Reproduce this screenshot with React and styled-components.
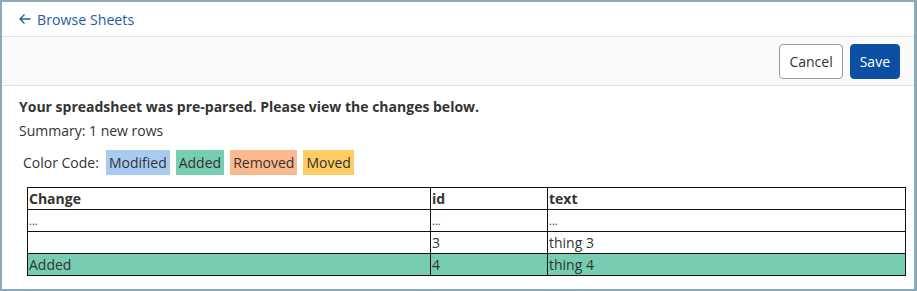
import styled, { createGlobalStyle } from "styled-components";

const GlobalStyle = createGlobalStyle`
  html, body {
    margin: 0;
    padding: 0;
    background: #fff;
  }
  * {
    box-sizing: border-box;
  }
`;

const legend = [
  { label: "Modified", color: "#a9cbf1" },
  { label: "Added", color: "#76cdb2" },
  { label: "Removed", color: "#fcb98e" },
  { label: "Moved", color: "#fdcc62" },
];

const rows = [
  { change: "...", id: "...", text: "...", small: true },
  { change: "", id: "3", text: "thing 3" },
  { change: "Added", id: "4", text: "thing 4", color: "#76cdb2" },
];

const App = () => {
  return (
    <S.Frame>
      <GlobalStyle />
      <S.TopBar>
        <S.BackLink href="#">
          <S.Arrow viewBox="0 0 12 12">
            <path d="M11.5 6H1M5.5 1.5L1 6l4.5 4.5" fill="none" stroke="currentColor" strokeWidth="1.3" />
          </S.Arrow>
          Browse Sheets
        </S.BackLink>
      </S.TopBar>
      <S.Toolbar>
        <S.Button>Cancel</S.Button>
        <S.Button $primary>Save</S.Button>
      </S.Toolbar>
      <S.Content>
        <S.Heading>Your spreadsheet was pre-parsed. Please view the changes below.</S.Heading>
        <S.Summary>Summary: 1 new rows</S.Summary>
        <S.Legend>
          <S.LegendLabel>Color Code:</S.LegendLabel>
          {legend.map((item) => (
            <S.Chip key={item.label} $color={item.color}>
              {item.label}
            </S.Chip>
          ))}
        </S.Legend>
        <S.Table>
          <colgroup>
            <S.Col $width="403px" />
            <S.Col $width="117px" />
            <S.Col />
          </colgroup>
          <thead>
            <tr>
              <S.Th>Change</S.Th>
              <S.Th>id</S.Th>
              <S.Th>text</S.Th>
            </tr>
          </thead>
          <tbody>
            {rows.map((row, i) => (
              <S.Tr key={i} $color={row.color}>
                <S.Td $small={row.small}>{row.change}</S.Td>
                <S.Td $small={row.small}>{row.id}</S.Td>
                <S.Td $small={row.small}>{row.text}</S.Td>
              </S.Tr>
            ))}
          </tbody>
        </S.Table>
      </S.Content>
    </S.Frame>
  );
};

export default App;

const Frame = styled.div`
  width: 917px;
  height: 291px;
  border: 2px solid #8ba9b9;
  border-right-width: 3px;
  font-family: "Open Sans", "Liberation Sans", sans-serif;
  font-size: 14px;
  color: #333;
  overflow: hidden;
`;

const TopBar = styled.div`
  height: 35px;
  display: flex;
  align-items: center;
  padding-left: 17px;
  border-bottom: 1px solid #e1e1e1;
`;

const BackLink = styled.a`
  display: flex;
  align-items: center;
  gap: 6px;
  color: #1f5ca6;
  text-decoration: none;
  font-size: 14.2px;
`;

const Arrow = styled.svg`
  width: 12px;
  height: 12px;
`;

const Toolbar = styled.div`
  height: 49px;
  display: flex;
  justify-content: flex-end;
  align-items: center;
  gap: 7px;
  padding-right: 14px;
  background: #fafafb;
  border-bottom: 1px solid #e1e1e1;
`;

const Button = styled.button`
  height: 35px;
  padding: 0 9px;
  border-radius: 4px;
  font-family: inherit;
  font-size: 14px;
  font-weight: 500;
  border: 1px solid ${({ $primary }) => ($primary ? "#0c4ea3" : "#9a9a9a")};
  background: ${({ $primary }) => ($primary ? "#0c4ea3" : "#fff")};
  color: ${({ $primary }) => ($primary ? "#fff" : "#333")};
  cursor: pointer;
`;

const Content = styled.div`
  padding: 11px 17px 0;
`;

const Heading = styled.div`
  font-weight: 700;
  line-height: 20px;
`;

const Summary = styled.div`
  margin-top: 4px;
  line-height: 20px;
`;

const Legend = styled.div`
  display: flex;
  align-items: center;
  gap: 6px;
  margin-top: 9px;
  padding-left: 4px;
`;

const LegendLabel = styled.span`
  margin-right: 1px;
`;

const Chip = styled.span`
  background: ${({ $color }) => $color};
  padding: 0 3px;
  line-height: 25px;
`;

const Table = styled.table`
  width: 879px;
  margin: 12px 0 0 8px;
  border-collapse: collapse;
  table-layout: fixed;
`;

const Col = styled.col`
  width: ${({ $width }) => $width || "auto"};
`;

const Th = styled.th`
  border: 1px solid #111;
  text-align: left;
  font-weight: 700;
  padding: 0 1px;
  height: 22px;
  line-height: 20px;
`;

const Tr = styled.tr`
  background: ${({ $color }) => $color || "transparent"};
`;

const Td = styled.td`
  border: 1px solid #111;
  padding: 0 1px;
  height: 22px;
  line-height: 20px;
  font-size: ${({ $small }) => ($small ? "11px" : "14px")};
  vertical-align: middle;
`;

const S = {
  Frame,
  TopBar,
  BackLink,
  Arrow,
  Toolbar,
  Button,
  Content,
  Heading,
  Summary,
  Legend,
  LegendLabel,
  Chip,
  Table,
  Col,
  Th,
  Tr,
  Td,
};
